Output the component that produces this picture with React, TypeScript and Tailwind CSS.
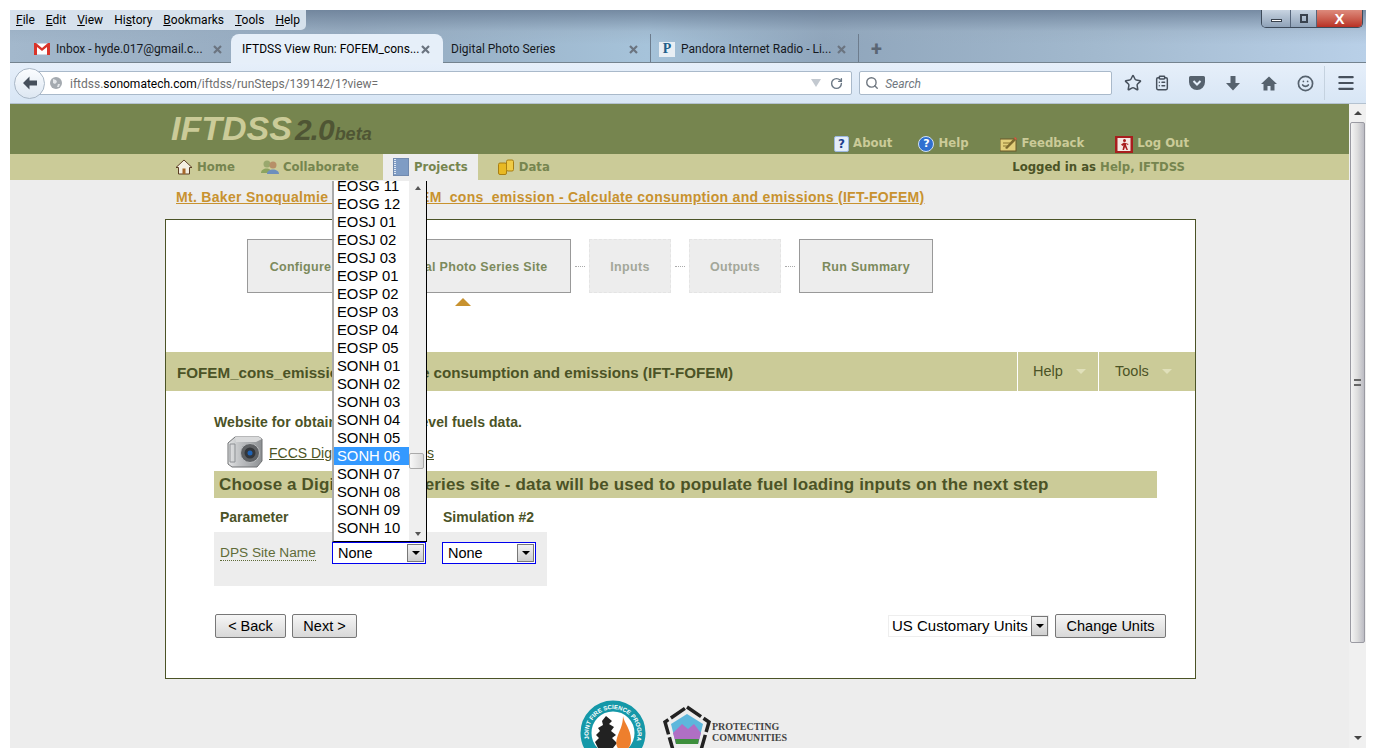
import { Search, RotateCw, Star, ClipboardList, Menu, Smile } from "lucide-react";

const SANS = "font-['Liberation_Sans',Arial,sans-serif]";
const WIN = "font-['Roboto','Noto_Sans',sans-serif]";

const MENU = ["File", "Edit", "View", "History", "Bookmarks", "Tools", "Help"];
const UNDER = [0, 0, 0, 2, 0, 0, 0];

const OPTIONS = [
  "EOSG 11", "EOSG 12", "EOSJ 01", "EOSJ 02", "EOSJ 03", "EOSP 01", "EOSP 02", "EOSP 03",
  "EOSP 04", "EOSP 05", "SONH 01", "SONH 02", "SONH 03", "SONH 04", "SONH 05", "SONH 06",
  "SONH 07", "SONH 08", "SONH 09", "SONH 10", "SONH 11",
];

const CloseX = () => (
  <svg width="9" height="9" viewBox="0 0 9 9" className="shrink-0">
    <path d="M1 1l7 7M8 1l-7 7" stroke="#6b7480" strokeWidth="2.2" />
  </svg>
);

const SelectArrow = ({ h = "h-[18px]" }: { h?: string }) => (
  <span className={`flex w-[17px] ${h} items-center justify-center border border-[#777] bg-gradient-to-b from-[#f2f2f2] to-[#cfcfcf]`}>
    <span className="h-0 w-0 border-x-[4px] border-t-[4px] border-x-transparent border-t-black" />
  </span>
);

const Select = ({ className }: { className: string }) => (
  <div className={`flex h-[22px] items-center justify-between border border-[#0000ee] bg-white pr-[1px] pl-[5px] text-[14.500px] leading-none text-black ${className}`}>
    None
    <SelectArrow />
  </div>
);

const Step = ({ label, className, dim }: { label: string; className: string; dim?: boolean }) => (
  <div
    className={`flex h-[54px] items-center justify-center border bg-[#ededed] pt-[3px] text-[12.500px] font-bold tracking-[0.3px] ${
      dim ? "border-dashed border-[#e4e4e4] text-[#a3a79a]" : "border-[#999] text-[#7c8a5c]"
    } ${className}`}
  >
    {label}
  </div>
);

const Dots = () => <div className="h-0 w-[10px] border-t border-dotted border-[#aaa]" />;

const NavItem = ({ icon, label, active }: { icon: React.ReactNode; label: string; active?: boolean }) => (
  <div className={`flex h-[26px] items-center gap-[4px] font-['DejaVu_Sans',sans-serif] text-[11.700px] font-bold text-[#76854f] ${active ? "bg-[#ededed] pr-[10px] pl-[9px]" : ""}`}>
    <span className="flex w-[18px] justify-center">{icon}</span>
    <span className="pt-[1px]">{label}</span>
  </div>
);

const TopLink = ({ icon, label, className }: { icon: React.ReactNode; label: string; className?: string }) => (
  <div className={`flex items-center gap-[4px] font-['DejaVu_Sans',sans-serif] text-[11.700px] font-bold text-[#cbcb98] ${className ?? ""}`}>
    {icon}
    {label}
  </div>
);

const Button = ({ label, className }: { label: string; className: string }) => (
  <div className={`flex h-[24px] items-center justify-center rounded-[2px] border border-[#777] bg-gradient-to-b from-[#f6f6f6] to-[#d8d8d8] pt-[1px] text-[14.500px] text-black ${className}`}>
    {label}
  </div>
);

export default function App() {
  return (
    <div className={`flex h-[748px] w-[1376px] flex-col overflow-hidden bg-white pt-[10px] pl-[10px] pr-[10px] ${SANS}`}>
      {/* title bar and tabs */}
      <div className="h-[53px] shrink-0 bg-[linear-gradient(180deg,rgba(108,128,152,0.85)_0%,rgba(150,170,190,0.35)_40%,rgba(170,187,205,0)_65%),linear-gradient(90deg,#a3b8cc_0%,#93a8bd_25%,#a6c3da_47%,#8fa5bb_60%,#a2b9ce_80%,#b9d0e8_100%)]">
        <div className="flex h-[24px] items-start justify-between">
          <div className={`flex h-[20px] items-center gap-[11px] rounded-br-[5px] bg-[#d6e1ec] pl-[6px] pr-[6px] text-[12px] text-black ${WIN}`}>
            {MENU.map((m, i) => (
              <span key={m}>
                {m.slice(0, UNDER[i])}
                <span className="underline">{m[UNDER[i]]}</span>
                {m.slice(UNDER[i] + 1)}
              </span>
            ))}
          </div>
          <div className="mr-[3px] flex h-[18px] w-[102px] overflow-hidden rounded-b-[5px] border border-t-0 border-[#3d4a5a]">
            <div className="flex w-[29px] items-center justify-center border-r border-[#56657a] bg-gradient-to-b from-[#c8d4e2] to-[#8fa2b8]">
              <div className="mt-[3px] h-[3px] w-[11px] border border-[#39424e] bg-white" />
            </div>
            <div className="flex w-[26px] items-center justify-center border-r border-[#56657a] bg-gradient-to-b from-[#c8d4e2] to-[#8fa2b8]">
              <div className="h-[9px] w-[8px] border-2 border-[#39424e]" />
            </div>
            <div className="flex flex-1 items-center justify-center bg-gradient-to-b from-[#dd8a7c] to-[#b82f24] text-[15px] font-bold leading-none text-white">X</div>
          </div>
        </div>
        <div className={`flex h-[29px] items-center border-b border-[#74838f] text-[12px] text-[#15191e] ${WIN}`}>
          <div className="flex h-[28px] w-[221px] items-center gap-[6px] pl-[24px] pr-[9px] pt-[2px]">
            <svg width="16" height="12" viewBox="0 0 16 12" className="shrink-0">
              <rect x="0.5" y="0.5" width="15" height="11" fill="#fff" />
              <path d="M0 0h2l6 5 6-5h2v12h-3V4L8 8 3 4v8H0z" fill="#d9342a" />
            </svg>
            <span className="flex-1 whitespace-nowrap">Inbox - hyde.017@gmail.c...</span>
            <CloseX />
          </div>
          <div className="flex h-[29px] w-[212px] items-center justify-between rounded-t-[8px] bg-[#e6eff9] pl-[11px] pr-[13px] pt-[2px] text-black">
            <span className="whitespace-nowrap">IFTDSS View Run: FOFEM_cons...</span>
            <CloseX />
          </div>
          <div className="flex h-[28px] w-[208px] items-center justify-between border-r border-[#6d7c8d] pl-[8px] pr-[12px] pt-[2px]">
            <span>Digital Photo Series</span>
            <CloseX />
          </div>
          <div className="flex h-[28px] w-[208px] items-center gap-[6px] border-r border-[#6d7c8d] pl-[8px] pr-[12px] pt-[2px]">
            <span className="flex h-[15px] w-[16px] shrink-0 items-center justify-center bg-[#e8eef4] font-['Liberation_Serif',serif] text-[14px] font-bold leading-none text-[#1f5f8b]">P</span>
            <span className="flex-1 whitespace-nowrap">Pandora Internet Radio - Li...</span>
            <CloseX />
          </div>
          <div className="ml-[12px] pt-[2px] text-[20px] font-bold leading-none text-[#5a6674]">+</div>
        </div>
      </div>

      {/* nav toolbar */}
      <div className="flex h-[41px] shrink-0 items-center border-b border-[#b4c2d0] bg-gradient-to-b from-[#e6effa] to-[#d8e6f5] pl-[4px] pr-[3px]">
        <div className="z-10 flex h-[31px] w-[31px] shrink-0 items-center justify-center rounded-full border border-[#a9b7c6] bg-gradient-to-b from-[#fbfdff] to-[#dde7f2]">
          <svg width="16" height="14" viewBox="0 0 16 14">
            <path d="M7.5 0.5L1 7l6.5 6.5V9.5H15v-5H7.5z" fill="#46505c" />
          </svg>
        </div>
        <div className={`-ml-[10px] flex h-[24px] w-[819px] items-center gap-[8px] rounded-r-[2px] border border-[#a9b9ca] bg-white pl-[14px] pr-[8px] text-[12px] text-[#6f6f6f] ${WIN}`}>
          <svg width="12" height="12" viewBox="0 0 12 12" className="shrink-0">
            <circle cx="6" cy="6" r="6" fill="#a4aab0" />
            <path d="M3 2l3 1 1 2-2 2-2-1zM8 7l2 0-1 3-2 0z" fill="#e3e6e9" />
          </svg>
          <span className="flex-1 whitespace-nowrap pt-[1px]">
            iftdss.<span className="text-black">sonomatech.com</span>/iftdss/runSteps/139142/1?view=
          </span>
          <span className="h-0 w-0 border-x-[5px] border-t-[8px] border-x-transparent border-t-[#c3c9d0]" />
          <RotateCw size={13} strokeWidth={2.6} color="#6a7784" className="ml-[1px]" />
        </div>
        <div className={`ml-[7px] flex h-[24px] w-[253px] items-center gap-[6px] rounded-[2px] border border-[#a9b9ca] bg-white pl-[5px] text-[12px] italic text-[#6f7780] ${WIN}`}>
          <Search size={14} strokeWidth={2.4} color="#6f7780" />
          <span className="pt-[1px]">Search</span>
        </div>
        <div className="flex w-[252px] items-center">
          <Star size={18} strokeWidth={2} color="#46505c" className="ml-[12px]" />
          <ClipboardList size={16} strokeWidth={2.2} color="#46505c" className="ml-[12px]" />
          <svg width="16" height="14" viewBox="0 0 16 14" className="ml-[19px]">
            <path d="M1.5 0h13A1.5 1.5 0 0 1 16 1.5V6a8 8 0 0 1-16 0V1.500A1.500 1.500 0 0 1 1.500 0z" fill="#56626e" />
            <path d="M4.500 5L8 8.500 11.500 5" stroke="#e4eefa" strokeWidth="2" fill="none" />
          </svg>
          <svg width="14" height="15" viewBox="0 0 14 15" className="ml-[21px]">
            <path d="M4.500 0h5v7H14L7 14.500 0 7h4.500z" fill="#56626e" />
          </svg>
          <svg width="16" height="15" viewBox="0 0 16 15" className="ml-[21px]">
            <path d="M8 0.500L0 8h2.500v6.500h4V10h3v4.500h4V8H16z" fill="#56626e" />
          </svg>
          <Smile size={17} strokeWidth={2.4} color="#56626e" className="ml-[20px]" />
          <div className="ml-[10px] h-[34px] w-px bg-[#c5d2df]" />
          <Menu size={20} strokeWidth={2.6} color="#46505c" className="ml-[11px]" />
        </div>
      </div>

      {/* page */}
      <div className="flex min-h-0 flex-1">
        <div className="relative min-w-0 flex-1 overflow-hidden bg-[#ededed]">
          <header className="flex h-[50px] items-end justify-between bg-[#76854f] pl-[161px] pr-[160px]">
            <div className="flex h-[50px] items-baseline pt-[7px] font-bold italic leading-none">
              <span className="text-[34px] text-[#cbcb98]">IFTDSS</span>
              <span className="ml-[3px] text-[30px] tracking-[-1px] text-[#4f5534]">2.0</span>
              <span className="ml-[1px] text-[18px] text-[#4f5534]">beta</span>
            </div>
            <div className="flex items-center pb-[1px]">
              <TopLink
                label="About"
                icon={<span className="flex h-[16px] w-[15px] items-center justify-center rounded-[2px] border border-[#9db8e0] bg-[#e4edf9] text-[12px] font-bold text-[#1d3f8e]">?</span>}
              />
              <TopLink
                className="ml-[26px]"
                label="Help"
                icon={<span className="flex h-[16px] w-[16px] items-center justify-center rounded-full border border-[#cfe0f5] bg-[#2f6fd0] text-[11px] font-bold text-white">?</span>}
              />
              <TopLink
                className="ml-[31px]"
                label="Feedback"
                icon={
                  <svg width="18" height="16" viewBox="0 0 18 16">
                    <rect y="3" width="16" height="12" fill="#e3cf7a" stroke="#6a5a2a" />
                    <path d="M3 7h7M3 10h5" stroke="#8a7430" />
                    <path d="M5 12L15 1l2 2L7 13z" fill="#7d6a2e" />
                    <path d="M15 1l2 2-1 1-2-2z" fill="#d9584a" />
                  </svg>
                }
              />
              <TopLink
                className="ml-[31px]"
                label="Log Out"
                icon={
                  <svg width="18" height="17" viewBox="0 0 18 17">
                    <rect width="18" height="17" fill="#a81e1e" />
                    <rect x="2.500" y="2" width="13" height="13" fill="#f5e9e4" />
                    <circle cx="9.500" cy="4.500" r="1.500" fill="#a81e1e" />
                    <path d="M9 6.500l-3 2 1.500 1.500 1-1-1 5h1.500l1-3 1.500 3h1.500l-2-5v-1l2 1 .5-1z" fill="#a81e1e" />
                  </svg>
                }
              />
            </div>
          </header>
          <nav className="flex h-[26px] items-center justify-between bg-[#cbcb98] pl-[165px] pr-[164px]">
            <div className="flex items-center">
              <NavItem
                label="Home"
                icon={
                  <svg width="16" height="16" viewBox="0 0 16 16">
                    <path d="M8 1L0 8.500h2.500V15h11V8.500H16z" fill="#f3efe2" stroke="#5a3d22" />
                    <rect x="6.500" y="9.500" width="3" height="5.500" fill="#a5682a" />
                  </svg>
                }
              />
              <div className="w-[26px]" />
              <NavItem
                label="Collaborate"
                icon={
                  <svg width="18" height="16" viewBox="0 0 18 16">
                    <circle cx="6" cy="5" r="3.500" fill="#9aa86e" />
                    <path d="M0 14c0-6 11-6 11 0z" fill="#8ca460" />
                    <circle cx="12" cy="6" r="3.500" fill="#b78f68" />
                    <path d="M6 15c0-6 12-6 12 0z" fill="#6d8fbd" />
                  </svg>
                }
              />
              <div className="w-[24px]" />
              <NavItem
                active
                label="Projects"
                icon={
                  <svg width="16" height="18" viewBox="0 0 16 18">
                    <rect width="16" height="18" rx="1" fill="#7f9cc4" stroke="#65799a" />
                    <path d="M2 1v16" stroke="#dfe7f2" strokeDasharray="1 1" strokeWidth="2" />
                  </svg>
                }
              />
              <div className="w-[19px]" />
              <NavItem
                label="Data"
                icon={
                  <svg width="16" height="16" viewBox="0 0 16 16">
                    <rect x="0.500" y="4" width="8" height="11.500" rx="1.500" fill="#e8b923" stroke="#a97f12" />
                    <rect x="8.500" y="1" width="7" height="11" rx="1.500" fill="#f0cb45" stroke="#a97f12" />
                  </svg>
                }
              />
            </div>
            <div className="pt-[1px] font-['DejaVu_Sans',sans-serif] text-[11.700px] font-bold text-[#4b5326]">
              Logged in as <span className="text-[#76854f]">Help, IFTDSS</span>
            </div>
          </nav>

          <div className="pl-[166px] pt-[9px] text-[14px] font-bold leading-[17px] tracking-[0.3px] text-[#c8922f]">
            <span className="underline">Mt. Baker Snoqualmie - Runs - FOFEM_cons_emission - Calculate consumption and emissions (IFT-FOFEM)</span>
          </div>

          <main className="mt-[13px] ml-[155px] h-[460px] w-[1031px] border border-[#4b5326] bg-white">
            <div className="flex items-center gap-[4px] pl-[81px] pt-[19px]">
              <Step label="Configure" className="w-[107px]" />
              <Dots />
              <Step label="Digital Photo Series Site" className="w-[199px]" />
              <Dots />
              <Step dim label="Inputs" className="w-[82px]" />
              <Dots />
              <Step dim label="Outputs" className="w-[92px]" />
              <Dots />
              <Step label="Run Summary" className="w-[134px]" />
            </div>
            <div className="ml-[289px] mt-[5px] h-0 w-0 border-x-[8px] border-b-[8px] border-x-transparent border-b-[#c8922f]" />

            <div className="mt-[46px] flex h-[39px] items-center justify-between bg-[#cbcb98] pl-[11px] text-[#4b5326]">
              <div className="pt-[3px] text-[15.200px] font-bold">FOFEM_cons_emission - Calculate consumption and emissions (IFT-FOFEM)</div>
              <div className="flex h-full text-[14.500px]">
                <div className="flex w-[81px] items-center gap-[13px] border-l border-white pl-[15px]">
                  Help
                  <span className="h-0 w-0 border-x-[5px] border-t-[5px] border-x-transparent border-t-[#e0e0ba]" />
                </div>
                <div className="flex w-[97px] items-center gap-[13px] border-l border-white pl-[16px]">
                  Tools
                  <span className="h-0 w-0 border-x-[5px] border-t-[5px] border-x-transparent border-t-[#e0e0ba]" />
                </div>
              </div>
            </div>

            <div className="pl-[48px] pr-[29px]">
              <p className="pt-[23px] text-[14px] font-bold leading-[17px] tracking-[0.07px] text-[#4b5326]">Website for obtaining surface level fuels data.</p>
              <div className="mt-[4px] flex h-[33px] items-center pl-[13px]">
                <svg width="36" height="34" viewBox="0 0 36 34">
                  <defs>
                    <linearGradient id="cam" x1="0" y1="0" x2="1" y2="0">
                      <stop offset="0" stopColor="#e4e5e6" />
                      <stop offset="0.3" stopColor="#c4c6c8" />
                      <stop offset="1" stopColor="#8d9093" />
                    </linearGradient>
                  </defs>
                  <path d="M1 8l7-6h24l3 2v22l-5 6H5l-4-3z" fill="url(#cam)" stroke="#6f7173" />
                  <path d="M8 2h24l3 2-6 3H9z" fill="#d9dadb" />
                  <path d="M3 9h5v18H3z" fill="none" stroke="#8d9093" />
                  <circle cx="23" cy="18" r="9.500" fill="#5e6164" stroke="#b9bbbd" />
                  <circle cx="23" cy="18" r="5.500" fill="#33363a" />
                  <circle cx="23" cy="18" r="2.500" fill="#1f63b5" />
                </svg>
                <span className="ml-[6px] mt-[3px] text-[14px] text-[#4b5326] underline">FCCS Digital Photo Series</span>
              </div>
              <div className="mt-[3px] flex h-[27px] w-[943px] items-center bg-[#cbcb98] pl-[5px] text-[17px] font-bold tracking-[0.15px] text-[#4b5326]">
                Choose a Digital Photo Series site - data will be used to populate fuel loading inputs on the next step
              </div>
              <div className="flex h-[34px] items-center pl-[6px] pt-[4px] text-[14px] font-bold text-[#4b5326]">
                <span className="w-[223px]">Parameter</span>
                <span>Simulation #2</span>
              </div>
              <div className="h-[54px] w-[333px] bg-[#ededed] pl-[6px] pt-[10px]">
                <div className="flex items-center">
                  <span className="w-[112px] text-[13.700px] text-[#5f6b38]">
                    <span className="border-b border-dotted border-[#5f6b38]">DPS Site Name</span>
                  </span>
                  <Select className="w-[94px]" />
                  <Select className="ml-[16px] w-[94px]" />
                </div>
              </div>
              <div className="mt-[28px] flex items-center justify-between pl-[1px]">
                <div className="flex gap-[6px]">
                  <Button label="< Back" className="w-[71px]" />
                  <Button label="Next >" className="w-[65px]" />
                </div>
                <div className="flex items-center gap-[6px]">
                  <div className="flex h-[22px] w-[161px] items-center justify-between border border-[#eee] pl-[3px] text-[15px] whitespace-nowrap text-black">
                    US Customary Units
                    <SelectArrow h="h-[20px]" />
                  </div>
                  <Button label="Change Units" className="w-[111px]" />
                </div>
              </div>
            </div>
          </main>

          {/* footer logos */}
          <div className="mt-[21px] flex items-start pl-[570px]">
            <svg width="66" height="66" viewBox="0 0 66 66">
              <path id="ring" d="M10 42A24.500 24.500 0 1 1 56 42" fill="none" />
              <circle cx="33" cy="33" r="27" fill="#fff" stroke="#1598a8" strokeWidth="11" />
              <text fontSize="6" fontWeight="bold" fill="#fff" fontFamily="Liberation Sans">
                <textPath href="#ring" startOffset="3">JOINT FIRE SCIENCE PROGRAM</textPath>
              </text>
              <path d="M26 16l6 5-3 3 5 3-3 4 5 4-4 3 5 5-4 5H18l-3-6 4-4-3-3 4-4-2-3 5-3-1-4z" fill="#222" />
              <path d="M43 16c1 7 8 13 8 24 0 6-3 10-8 12-6-2-8-8-6-14 2-7 6-12 6-22z" fill="#ee7f2d" />
            </svg>
            <svg width="50" height="50" viewBox="0 0 50 50" className="ml-[16px] mt-[5px]">
              <path d="M25 2L47 17l-8 28H11L3 17z" fill="none" stroke="#222" strokeWidth="3.500" strokeDasharray="17 3" />
              <path d="M25 9L41 19l-5 20H14L9 19z" fill="#5db7dc" />
              <path d="M11 28l9-9 6 5 6-5 7 9-3 11H14z" fill="#b06fc4" />
              <path d="M13 34h24l-1 5H14z" fill="#3d8f3c" />
            </svg>
            <div className="mt-[21px] whitespace-nowrap font-['Liberation_Serif',serif] text-[10px] font-bold leading-[11px] text-[#444]">
              PROTECTING
              <br />
              COMMUNITIES
            </div>
          </div>

          {/* open select list */}
          <div className="absolute left-[322px] top-[77px] h-[361px] w-[95px] overflow-hidden border-r border-b border-l-2 border-r-black border-b-black border-l-[#aaa] bg-white">
            <div className="flex h-full">
              <div className="h-full w-[75px] overflow-hidden">
                <div className="-mt-[4px] text-[14.800px] leading-[18px] text-black">
                  {OPTIONS.map((o) => (
                    <div key={o} className={`h-[18px] pl-[3px] ${o === "SONH 06" ? "bg-[#3399ff] text-white" : ""}`}>
                      {o}
                    </div>
                  ))}
                </div>
              </div>
              <div className="relative flex h-full w-[17px] flex-col items-center justify-between bg-[#efefef] py-[5px]">
                <span className="h-0 w-0 border-x-[3px] border-b-[4px] border-x-transparent border-b-[#555]" />
                <span className="absolute left-0 top-[272px] h-[16px] w-[15px] rounded-[2px] border border-[#aaa] bg-gradient-to-r from-[#f8f8f8] to-[#d9d9d9]" />
                <span className="h-0 w-0 border-x-[3px] border-t-[4px] border-x-transparent border-t-[#555]" />
              </div>
            </div>
          </div>
        </div>

        {/* page scrollbar */}
        <div className="flex w-[17px] shrink-0 flex-col items-center bg-[#f0f0f0]">
          <div className="flex h-[18px] items-center">
            <span className="h-0 w-0 border-x-[4px] border-b-[4px] border-x-transparent border-b-[#444]" />
          </div>
          <div className="flex h-[521px] w-[15px] items-center justify-center rounded-[2px] border border-[#9a9aa2] bg-gradient-to-r from-[#f4f4f4] via-[#ddd] to-[#bcbcc4]">
            <div className="h-[7px] w-[7px] border-y-2 border-[#666]" />
          </div>
          <div className="flex-1" />
          <div className="flex h-[18px] items-center pb-[3px]">
            <span className="h-0 w-0 border-x-[4px] border-t-[4px] border-x-transparent border-t-[#444]" />
          </div>
        </div>
      </div>
    </div>
  );
}
